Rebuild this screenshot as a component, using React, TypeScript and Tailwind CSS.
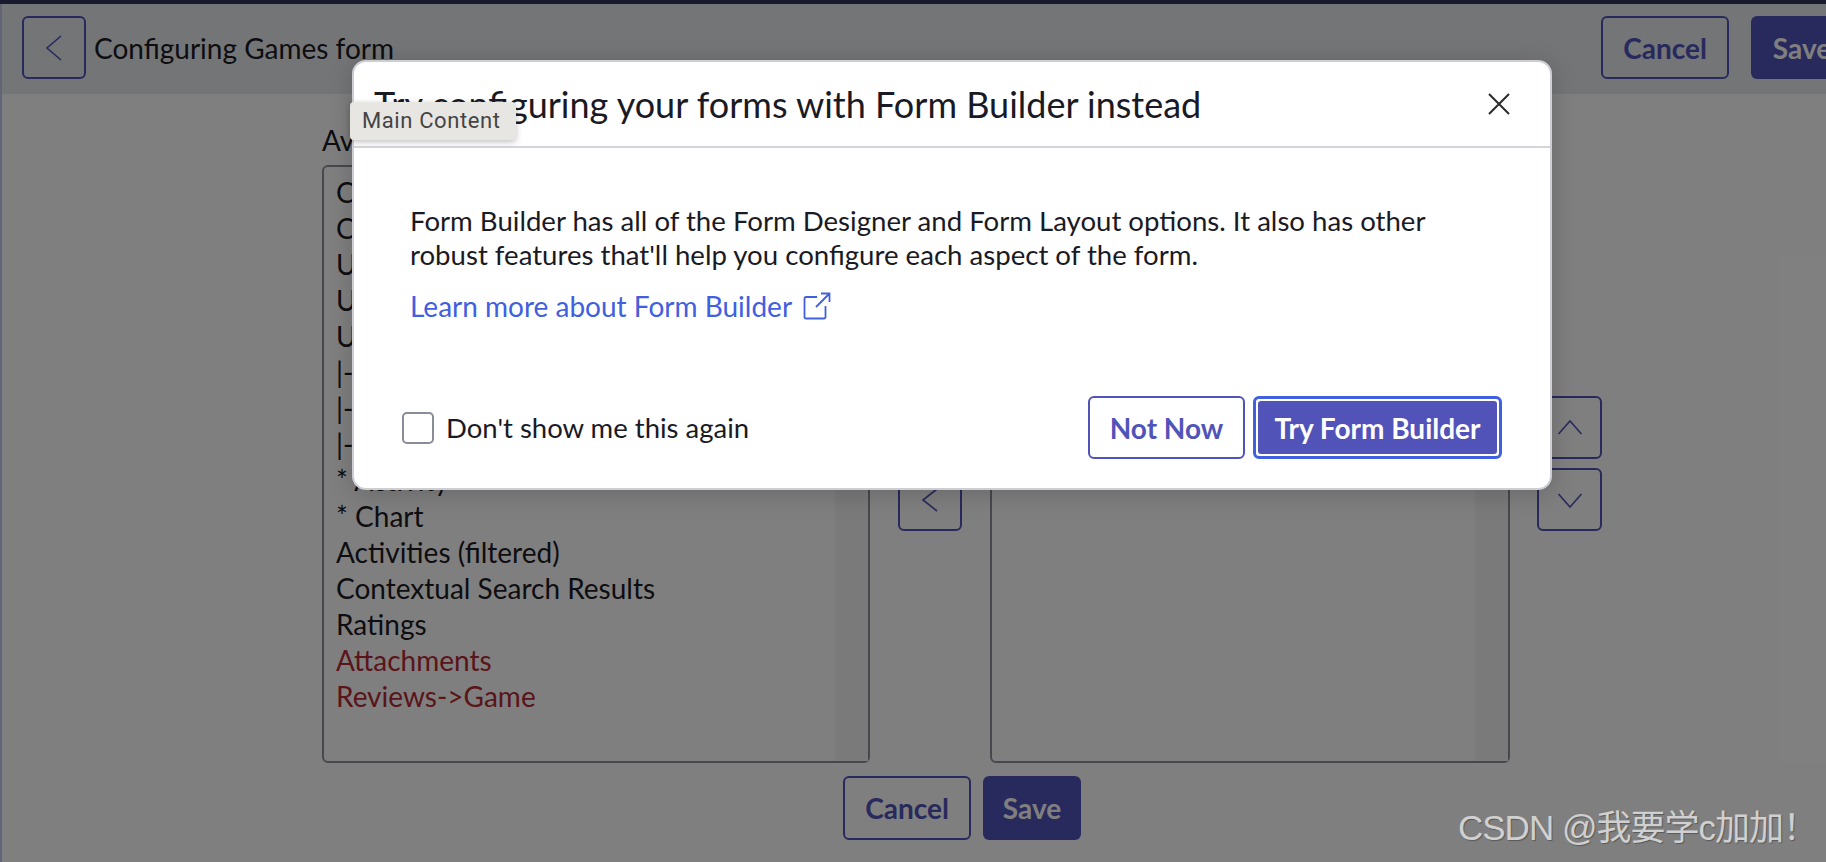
import React from "react";

const items = [
  "Created", "Created by", "Updated", "Updated by", "Updates",
  "|- begin_split -|", "|- split -|", "|- end_split -|",
  "* Activity", "* Chart", "Activities (filtered)", "Contextual Search Results", "Ratings",
];

function Chevron({ d }: { d: string }) {
  return (
    <svg width="32" height="32" viewBox="0 0 32 32" fill="none" stroke="#5153b8" strokeWidth="1.6">
      <path d={d} />
    </svg>
  );
}

export default function App() {
  return (
    <div className="relative h-[862px] w-[1826px] overflow-hidden bg-white font-['Lato',sans-serif] text-[#1a1a24]">
      <div className="h-1 bg-[#34345c]" />
      <div className="h-[858px] border-l-2 border-[#c9c9f0]">
        <header className="flex h-[90px] items-start bg-[#e8eaee] pl-5 pr-0 pt-3">
          <button className="flex h-[63px] w-16 items-center justify-center rounded-md border-2 border-[#5153b8]">
            <Chevron d="M23 4 L9 16 L23 28" />
          </button>
          <h1 className="ml-2 h-[63px] text-[28px] font-normal leading-[65px]">Configuring Games form</h1>
          <div className="ml-auto flex shrink-0 gap-[22px]">
            <button className="h-[63px] w-[128px] rounded-md border-2 border-[#5153b8] text-[28px] font-bold text-[#5153b8]">Cancel</button>
            <button className="-mr-[27px] h-[63px] w-[102px] rounded-md bg-[#5153b8] text-[28px] font-bold text-white">Save</button>
          </div>
        </header>
        <main className="pl-[320px] pt-[28px]">
          <div className="h-[43px] text-[28px] leading-[36px]">Available</div>
          <div className="flex items-start">
            <div className="relative h-[598px] w-[548px] rounded-md border-2 border-[#8e8e9a] pl-3 pt-[7px] text-[28px] leading-[36px]">
              <div className="absolute bottom-0 right-0 top-0 w-[33px] bg-[#f5f5f5]" />
              {items.map((t) => (
                <div key={t} className="relative">{t}</div>
              ))}
              <div className="relative text-[#b52a35]">Attachments</div>
              <div className="relative text-[#b52a35]">Reviews-&gt;Game</div>
            </div>
            <div className="ml-7 flex w-16 flex-col gap-[9px] pt-[231px]">
              <button className="flex h-[63px] items-center justify-center rounded-md border-2 border-[#5153b8]"><Chevron d="M9 5 L23 16 L9 27" /></button>
              <button className="flex h-[63px] items-center justify-center rounded-md border-2 border-[#5153b8]"><Chevron d="M23 5 L9 16 L23 27" /></button>
            </div>
            <div className="relative ml-7 h-[598px] w-[520px] rounded-md border-2 border-[#8e8e9a]">
              <div className="absolute bottom-0 right-0 top-0 w-[33px] bg-[#f5f5f5]" />
            </div>
            <div className="ml-[27px] flex w-[65px] flex-col gap-[9px] pt-[231px]">
              <button className="flex h-[63px] items-center justify-center rounded-md border-2 border-[#5153b8]"><Chevron d="M4.5 22 L16 9 L27.5 22" /></button>
              <button className="flex h-[63px] items-center justify-center rounded-md border-2 border-[#5153b8]"><Chevron d="M4.5 10 L16 23 L27.5 10" /></button>
            </div>
          </div>
          <div className="ml-[521px] mt-[13px] flex gap-3">
            <button className="h-[64px] w-[128px] rounded-md border-2 border-[#5153b8] text-[28px] font-bold text-[#5153b8]">Cancel</button>
            <button className="h-[64px] w-[98px] rounded-md bg-[#5153b8] text-[28px] font-bold text-white">Save</button>
          </div>
        </main>
      </div>

      <div className="absolute inset-0 bg-black/50" />

      <section className="absolute left-[352px] top-[60px] h-[430px] w-[1200px] rounded-[14px] border-2 border-[#cdced4] bg-white shadow-[0_4px_24px_rgba(0,0,0,0.18)]">
        <div className="flex h-[86px] items-center justify-between border-b-2 border-[#d4d4dc] pl-5 pr-10">
          <h2 className="text-[36px] font-normal">Try configuring your forms with Form Builder instead</h2>
          <svg width="22" height="22" viewBox="0 0 22 22" fill="none" stroke="#2a2a2a" strokeWidth="2">
            <path d="M1 1 L21 21 M21 1 L1 21" />
          </svg>
        </div>
        <div className="pl-14 pt-[56px] text-[27.6px] leading-[34px]">
          <p>Form Builder has all of the Form Designer and Form Layout options. It also has other<br />robust features that'll help you configure each aspect of the form.</p>
          <a className="mt-[17px] flex items-center text-[28px] text-[#4060e0]">
            Learn more about Form Builder
            <svg className="ml-[11px]" width="28" height="28" viewBox="0 0 28 28" fill="none" stroke="#4060e0" strokeWidth="1.8">
              <path d="M14 5 H3 a1.5 1.5 0 0 0 -1.5 1.5 V25 a1.5 1.5 0 0 0 1.5 1.5 H21 a1.5 1.5 0 0 0 1.5 -1.5 V14 M13 15 L26.5 1.5 M18 1.5 H26.5 V10" />
            </svg>
          </a>
        </div>
        <div className="absolute bottom-[29px] left-12 right-[48px] flex items-center">
          <span className="h-8 w-8 rounded-[5px] border-2 border-[#8a8d99] bg-white" />
          <span className="ml-3 text-[27.5px]">Don't show me this again</span>
          <button className="ml-auto h-[63px] w-[157px] rounded-md border-2 border-[#5153b8] text-[28px] font-bold text-[#5153b8]">Not Now</button>
          <button className="ml-2 h-[63px] w-[249px] rounded-md border-[3px] border-[#4060e0] bg-white p-[2px]">
            <span className="flex h-full items-center justify-center rounded-[3px] bg-[#5153b8] text-[28px] font-bold text-white">Try Form Builder</span>
          </button>
        </div>
      </section>

      <div className="absolute left-[350px] top-[102px] h-[38px] w-[166px] rounded-sm bg-[#e8e6e3] pl-3 font-['Roboto',sans-serif] text-[22px] leading-[38px] tracking-[0.6px] text-[#444444] shadow-[0_2px_6px_rgba(0,0,0,0.25)]">Main Content</div>

      <div className="absolute left-[1458px] top-[808px] whitespace-nowrap font-['Liberation_Sans','Noto_Sans_CJK_SC',sans-serif] text-[35px] leading-[40px] tracking-[-1px] text-[#d0d0d0] [text-shadow:1px_1px_1px_rgba(0,0,0,0.3)]">CSDN @我要学c加加！</div>
    </div>
  );
}
